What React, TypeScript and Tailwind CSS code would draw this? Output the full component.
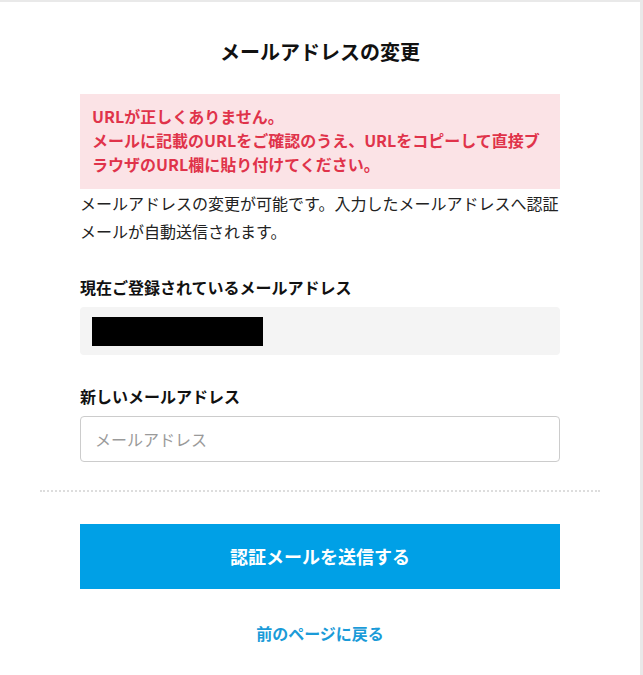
import React from 'react';

const jp = { fontFamily: '"Noto Sans CJK JP", "Noto Sans", sans-serif' };

function Field({ label, children, top }: { label: string; children: React.ReactNode; top: string }) {
  return (
    <div className={top}>
      <p className="mb-[8px] text-[16px] font-bold leading-[24px] text-[#111]">{label}</p>
      {children}
    </div>
  );
}

export default function App() {
  return (
    <div className="min-h-[675px] bg-[#e9e9e9] pr-[3px] pt-[2px]" style={jp}>
      <div className="min-h-[673px] bg-white px-[40px] pb-[30px]">
        <h1 className="pt-[35px] text-center text-[20px] font-bold leading-[30px] text-[#111]">
          メールアドレスの変更
        </h1>

        <div className="mx-auto w-[480px]">
          <div className="mt-[27px] bg-[#fbe3e6] px-[12px] pb-[13px] pt-[10px] text-[16px] font-bold leading-[24px] text-[#e0334a]">
            URLが正しくありません。
            <br />
            メールに記載のURLをご確認のうえ、URLをコピーして直接ブラウザのURL欄に貼り付けてください。
          </div>

          <p className="text-[16px] leading-[28px] text-[#222]">
            メールアドレスの変更が可能です。入力したメールアドレスへ認証メールが自動送信されます。
          </p>

          <Field label="現在ご登録されているメールアドレス" top="mt-[30px]">
            <div className="flex h-[48px] items-center rounded-[4px] bg-[#f4f4f4] px-[12px]">
              <div className="h-[29px] w-[171px] bg-black" />
            </div>
          </Field>

          <Field label="新しいメールアドレス" top="mt-[29px]">
            <input
              type="email"
              placeholder="メールアドレス"
              className="h-[46px] w-full rounded-[4px] border border-[#cccccc] bg-white px-[14px] text-[16px] text-[#222] outline-none placeholder:text-[#9a9a9a]"
              style={jp}
            />
          </Field>
        </div>

        <div className="mt-[28px] border-t-2 border-dotted border-[#dddddd]" />

        <div className="mx-auto w-[480px]">
          <button
            type="button"
            className="mt-[32px] flex h-[65px] w-full items-center justify-center bg-[#00a0e6] text-[18px] font-bold text-white"
            style={jp}
          >
            認証メールを送信する
          </button>
          <div className="mt-[32px] text-center">
            <a href="#" className="text-[16px] font-bold leading-[24px] text-[#1a9bd8]">
              前のページに戻る
            </a>
          </div>
        </div>
      </div>
    </div>
  );
}
